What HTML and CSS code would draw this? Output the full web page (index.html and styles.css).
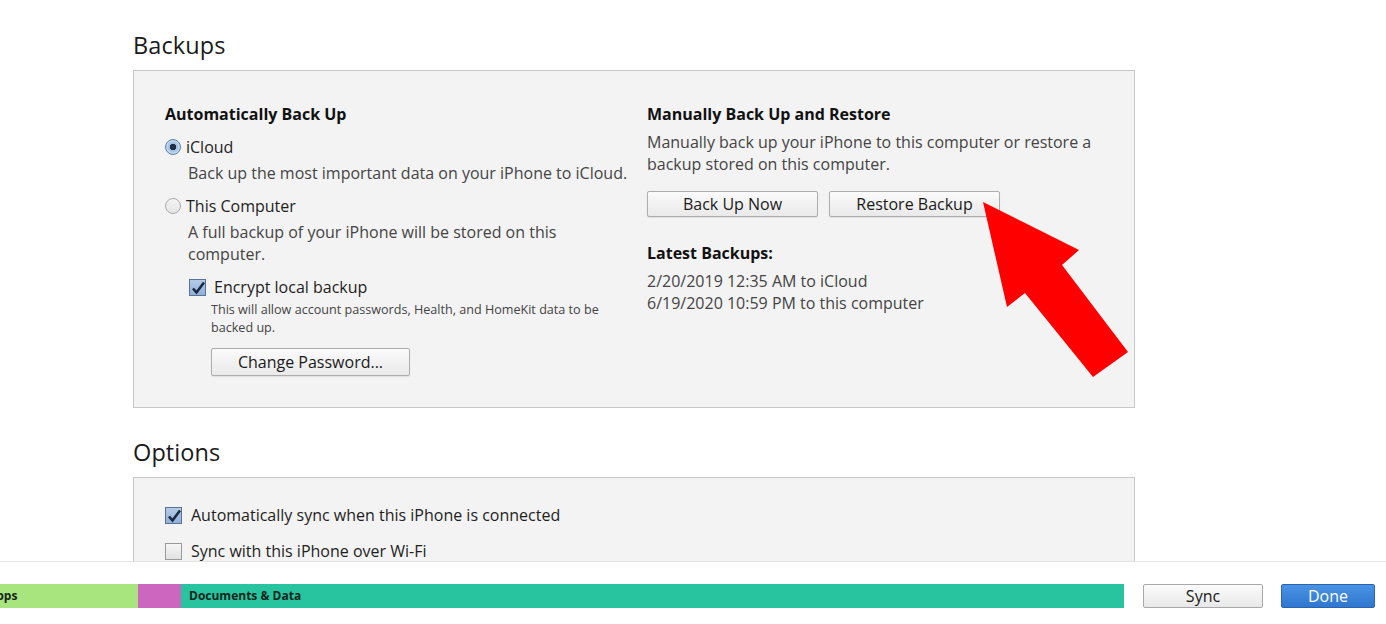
FILE: index.html
```html
<!DOCTYPE html>
<html>
<head>
<meta charset="utf-8">
<link rel="stylesheet" href="styles.css">
</head>
<body>
<div class="main">
  <div class="content">
    <h2 class="section-title">Backups</h2>
    <div class="box backups">
      <div class="col left">
        <div class="head">Automatically Back Up</div>
        <div class="opt gap11"><span class="radio on"></span><span>iCloud</span></div>
        <div class="desc gap4">Back up the most important data on your iPhone to iCloud.</div>
        <div class="opt gap11"><span class="radio"></span><span>This Computer</span></div>
        <div class="desc gap4">A full backup of your iPhone will be stored on this<br>computer.</div>
        <div class="sub">
          <div class="opt gap11"><span class="check on"></span><span>Encrypt local backup</span></div>
          <div class="small">This will allow account passwords, Health, and HomeKit data to be<br>backed up.</div>
          <button class="btn pw">Change Password...</button>
        </div>
      </div>
      <div class="col right">
        <div class="head">Manually Back Up and Restore</div>
        <div class="desc gap6">Manually back up your iPhone to this computer or restore a<br>backup stored on this computer.</div>
        <div class="btnrow">
          <button class="btn wide">Back Up Now</button>
          <button class="btn wide">Restore Backup</button>
        </div>
        <div class="head latest">Latest Backups:</div>
        <div class="desc gap6">2/20/2019 12:35 AM to iCloud<br>6/19/2020 10:59 PM to this computer</div>
      </div>
      <svg class="arrow" width="1002" height="338" viewBox="0 0 1002 338">
        <polygon points="850,132 946,180 929,195 995,282 960,307 892,223 874,237" fill="#ff0000"/>
      </svg>
    </div>
    <h2 class="section-title">Options</h2>
    <div class="box options">
      <div class="opt"><span class="check on"></span><span>Automatically sync when this iPhone is connected</span></div>
      <div class="opt wifi"><span class="check"></span><span>Sync with this iPhone over Wi-Fi</span></div>
    </div>
  </div>
</div>
<div class="footer">
  <div class="bar">
    <div class="seg apps">Apps</div>
    <div class="seg photos"></div>
    <div class="seg docs">Documents &amp; Data</div>
  </div>
  <button class="fbtn sync">Sync</button>
  <button class="fbtn done">Done</button>
</div>
</body>
</html>
```

FILE: styles.css
```css
html, body {
  margin: 0;
  padding: 0;
  height: 100%;
  background: #ffffff;
}
body {
  display: flex;
  flex-direction: column;
  font-family: "Open Sans", "Noto Sans", sans-serif;
  font-size: 16px;
  color: #222;
  overflow: hidden;
}
.main {
  flex: 1;
  overflow: hidden;
}
.content {
  width: 1002px;
  margin-left: 133px;
}
.section-title {
  margin: 0 0 10px 0;
  padding-top: 30px;
  font-size: 23.5px;
  line-height: 30px;
  font-weight: normal;
  color: #1a1a1a;
  letter-spacing: 0.1px;
}
.box {
  border: 1px solid #c8c8c8;
  background: #f3f3f3;
  box-sizing: border-box;
}
.backups {
  position: relative;
  display: grid;
  grid-template-columns: 482px 1fr;
  padding: 32px 31px 31px 31px;
  margin-bottom: 29px;
}
.backups + .section-title {
  padding-top: 0;
}
.col {
  display: flex;
  flex-direction: column;
  align-items: flex-start;
}
.head {
  font-weight: bold;
  line-height: 22px;
  color: #111;
  font-size: 16px;
}
.opt {
  display: flex;
  align-items: center;
  line-height: 22px;
  color: #1e1e1e;
}
.gap11 { margin-top: 11px; }
.gap4 { margin-top: 4px; }
.gap6 { margin-top: 6px; }
.desc {
  line-height: 22px;
  color: #444;
  padding-left: 23px;
}
.right .desc { padding-left: 0; }
.radio {
  width: 14px;
  height: 14px;
  border-radius: 50%;
  border: 1px solid #a9a9a9;
  background: linear-gradient(#f4f4f4, #e4e4e4);
  margin-right: 5px;
  position: relative;
  flex: none;
}
.radio.on {
  border-color: #5b7fa8;
  background: radial-gradient(circle, #1f2f45 0 3px, #9dbde0 3.5px, #c8dcf0 7px);
}
.check {
  border: 1px solid #9a9a9a;
  background: linear-gradient(#f6f6f6, #e2e2e2);
  margin-right: 8px;
  flex: none;
  box-sizing: border-box;
  width: 17px;
  height: 17px;
}
.check.on {
  border-color: #5a7399;
  background-image: url("data:image/svg+xml;utf8,<svg xmlns='http://www.w3.org/2000/svg' width='17' height='17' viewBox='0 0 17 17'><path d='M3 8.5 L6.5 12.5 L14 2.5' fill='none' stroke='%231a2a40' stroke-width='2.6'/></svg>"), linear-gradient(#b5cbe6, #8fb0d9);
}
.sub {
  padding-left: 24px;
  display: flex;
  flex-direction: column;
  align-items: flex-start;
}
.small {
  font-size: 12.6px;
  line-height: 18px;
  color: #444;
  padding-left: 22px;
  margin-top: 3px;
}
.btn {
  font-family: inherit;
  font-size: 16px;
  color: #1a1a1a;
  border: 1px solid #adadad;
  border-radius: 2px;
  background: linear-gradient(#fbfbfb, #e9e9e9);
  box-shadow: 0 1px 1px rgba(0,0,0,0.08);
  padding: 0;
}
.pw {
  width: 199px;
  height: 28px;
  margin-top: 11px;
  margin-left: 22px;
}
.btnrow {
  display: flex;
  gap: 11px;
  margin-top: 16px;
}
.wide {
  width: 171px;
  height: 26px;
}
.latest { margin-top: 25px; }
.arrow {
  position: absolute;
  left: -1px;
  top: -1px;
  overflow: visible;
  pointer-events: none;
}
.options {
  padding: 26px 31px 40px 31px;
}
.options .opt .check { margin-right: 9px; }
.wifi { margin-top: 14px; }
.footer {
  height: 63px;
  flex: none;
  border-top: 1px solid #e3e3e3;
  background: #ffffff;
  display: flex;
  align-items: flex-start;
  padding-top: 22px;
  box-sizing: border-box;
  position: relative;
}
.bar {
  display: flex;
  height: 24px;
  margin-left: -22px;
}
.seg {
  height: 24px;
  line-height: 24px;
  font-size: 12px;
  font-weight: bold;
  color: #15261a;
  box-sizing: border-box;
  padding-left: 8px;
  white-space: nowrap;
  overflow: hidden;
}
.apps { width: 160px; background: #a8e57f; padding-left: 10px; }
.photos { width: 43px; background: #cc66bf; }
.docs { width: 943px; background: #28c4a0; }
.fbtn {
  font-family: inherit;
  font-size: 16px;
  height: 24px;
  border-radius: 2px;
  padding: 0;
}
.sync {
  width: 120px;
  margin-left: 19px;
  border: 1px solid #a8a8a8;
  background: linear-gradient(#fbfbfb, #e8e8e8);
  color: #1a1a1a;
}
.done {
  width: 94px;
  margin-left: 18px;
  border: 1px solid #2a64ae;
  background: linear-gradient(#4a93e4, #2f77cf);
  color: #ffffff;
}
```
